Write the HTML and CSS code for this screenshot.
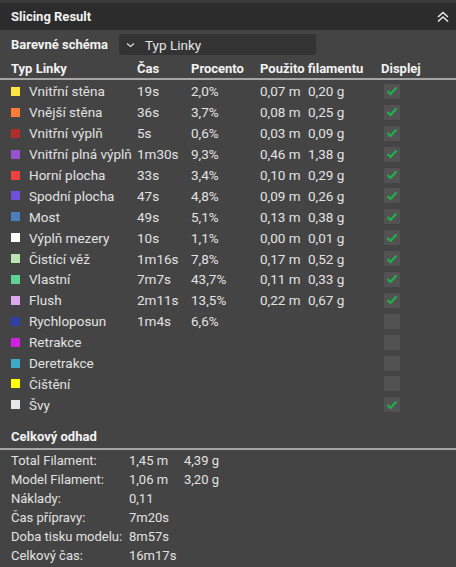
FILE: index.html
```html
<!DOCTYPE html>
<html lang="cs">
<head>
  <meta charset="UTF-8">
  <meta name="viewport" content="width=device-width, initial-scale=1.0">
  <title>Slicing Result</title>
  <link rel="stylesheet" href="styles.css">
</head>
<body>
  <div class="panel">
    <div class="panel-head">
      <span class="panel-title">Slicing Result</span>
      <svg class="collapse" width="14" height="12" viewBox="0 0 14 12">
        <path d="M2 6 L7 1.5 L12 6 M2 10.5 L7 6 L12 10.5" fill="none" stroke="#eee" stroke-width="1.5"/>
      </svg>
    </div>

    <div class="scheme">
      <span class="scheme-label">Barevné schéma</span>
      <div class="select">
        <svg width="9" height="6" viewBox="0 0 9 6"><path d="M1 1.5 L4.5 4.5 L8 1.5" fill="none" stroke="#ddd" stroke-width="1.2"/></svg>
        <span>Typ Linky</span>
      </div>
    </div>

    <div class="grid head-row">
      <span>Typ Linky</span>
      <span>Čas</span>
      <span>Procento</span>
      <span class="span2">Použito filamentu</span>
      <span>Displej</span>
    </div>

    <div id="rows"></div>

    <div class="sum-title">Celkový odhad</div>
    <div class="summary">
      <div class="sum-row"><span>Total Filament:</span><span>1,45 m</span><span>4,39 g</span></div>
      <div class="sum-row"><span>Model Filament:</span><span>1,06 m</span><span>3,20 g</span></div>
      <div class="sum-row"><span>Náklady:</span><span>0,11</span><span></span></div>
      <div class="sum-row"><span>Čas přípravy:</span><span>7m20s</span><span></span></div>
      <div class="sum-row"><span>Doba tisku modelu:</span><span>8m57s</span><span></span></div>
      <div class="sum-row"><span>Celkový čas:</span><span>16m17s</span><span></span></div>
    </div>
  </div>

  <script>
    const lines = [
      ['#ffe640', 'Vnitřní stěna', '19s', '2,0%', '0,07 m', '0,20 g', true],
      ['#ff7d38', 'Vnější stěna', '36s', '3,7%', '0,08 m', '0,25 g', true],
      ['#b03029', 'Vnitřní výplň', '5s', '0,6%', '0,03 m', '0,09 g', true],
      ['#9654cc', 'Vnitřní plná výplň', '1m30s', '9,3%', '0,46 m', '1,38 g', true],
      ['#f04040', 'Horní plocha', '33s', '3,4%', '0,10 m', '0,29 g', true],
      ['#7050d8', 'Spodní plocha', '47s', '4,8%', '0,09 m', '0,26 g', true],
      ['#4d80ba', 'Most', '49s', '5,1%', '0,13 m', '0,38 g', true],
      ['#ffffff', 'Výplň mezery', '10s', '1,1%', '0,00 m', '0,01 g', true],
      ['#b8e6b0', 'Čistící věž', '1m16s', '7,8%', '0,17 m', '0,52 g', true],
      ['#5ed194', 'Vlastní', '7m7s', '43,7%', '0,11 m', '0,33 g', true],
      ['#dca8f0', 'Flush', '2m11s', '13,5%', '0,22 m', '0,67 g', true],
      ['#3040a4', 'Rychloposun', '1m4s', '6,6%', '', '', false],
      ['#d020e0', 'Retrakce', '', '', '', '', false],
      ['#40a8c8', 'Deretrakce', '', '', '', '', false],
      ['#ffff00', 'Čištění', '', '', '', '', false],
      ['#e6e6e6', 'Švy', '', '', '', '', true]
    ];

    const check = '<svg width="12" height="10" viewBox="0 0 12 10"><path d="M1.5 5 L4.5 8 L10.5 1.5" fill="none" stroke="#1fb14a" stroke-width="2.2"/></svg>';
    const rows = document.getElementById('rows');

    lines.forEach(([color, name, time, pct, len, weight, shown]) => {
      const row = document.createElement('div');
      row.className = 'grid line-row';
      row.innerHTML =
        '<span class="name"><i class="swatch" style="background:' + color + '"></i>' + name + '</span>' +
        '<span>' + time + '</span>' +
        '<span>' + pct + '</span>' +
        '<span>' + len + '</span>' +
        '<span>' + weight + '</span>' +
        '<span class="box">' + (shown ? check : '') + '</span>';
      rows.appendChild(row);
    });
  </script>
</body>
</html>
```

FILE: styles.css
```css
html, body {
  margin: 0;
  background-color: #444444;
}
body {
  font-family: Roboto, sans-serif;
  font-size: 13.5px;
  color: #e2e2e2;
}
.panel {
  border-top: 3px solid #3a3a3a;
}
.panel-head {
  display: flex;
  align-items: center;
  justify-content: space-between;
  height: 27px;
  padding: 0 6px 0 11px;
  background-color: #2c2c2c;
}
.panel-title {
  font-size: 13px;
  font-weight: bold;
  color: #f2f2f2;
}
.collapse {
  margin-top: 1px;
}
.scheme {
  display: flex;
  align-items: center;
  height: 28px;
  padding: 0 11px;
}
.scheme-label {
  width: 108px;
  font-size: 13px;
  font-weight: bold;
  color: #f2f2f2;
}
.select {
  display: flex;
  align-items: center;
  gap: 10px;
  width: 190px;
  height: 21px;
  padding-left: 7px;
  margin-top: 1px;
  background-color: #333333;
  border-radius: 3px;
  color: #e6e6e6;
}
.grid {
  display: grid;
  grid-template-columns: 126px 54px 69px 48px 73px 20px;
  align-items: center;
  padding-left: 11px;
  white-space: nowrap;
}
.head-row {
  height: 20px;
  font-size: 13px;
  font-weight: bold;
  color: #f2f2f2;
  border-bottom: 2px solid #a5a5a5;
}
.head-row .span2 {
  grid-column: span 2;
}
#rows {
  padding-top: 1px;
}
.line-row {
  height: 20.9px;
}
.name {
  display: flex;
  align-items: center;
}
.swatch {
  display: inline-block;
  width: 9px;
  height: 9px;
  margin-right: 9px;
}
.box {
  display: flex;
  align-items: center;
  justify-content: center;
  width: 16px;
  height: 15px;
  margin-left: 3px;
  background-color: #525252;
}
.sum-title {
  height: 22px;
  line-height: 22px;
  margin-top: 11px;
  padding-left: 11px;
  font-size: 13px;
  font-weight: bold;
  color: #f2f2f2;
  border-bottom: 2px solid #a5a5a5;
}
.summary {
  padding: 1px 0 0 11px;
  font-size: 13px;
}
.sum-row {
  display: grid;
  grid-template-columns: 118px 55px auto;
  height: 19px;
  align-items: center;
  white-space: nowrap;
}
```
